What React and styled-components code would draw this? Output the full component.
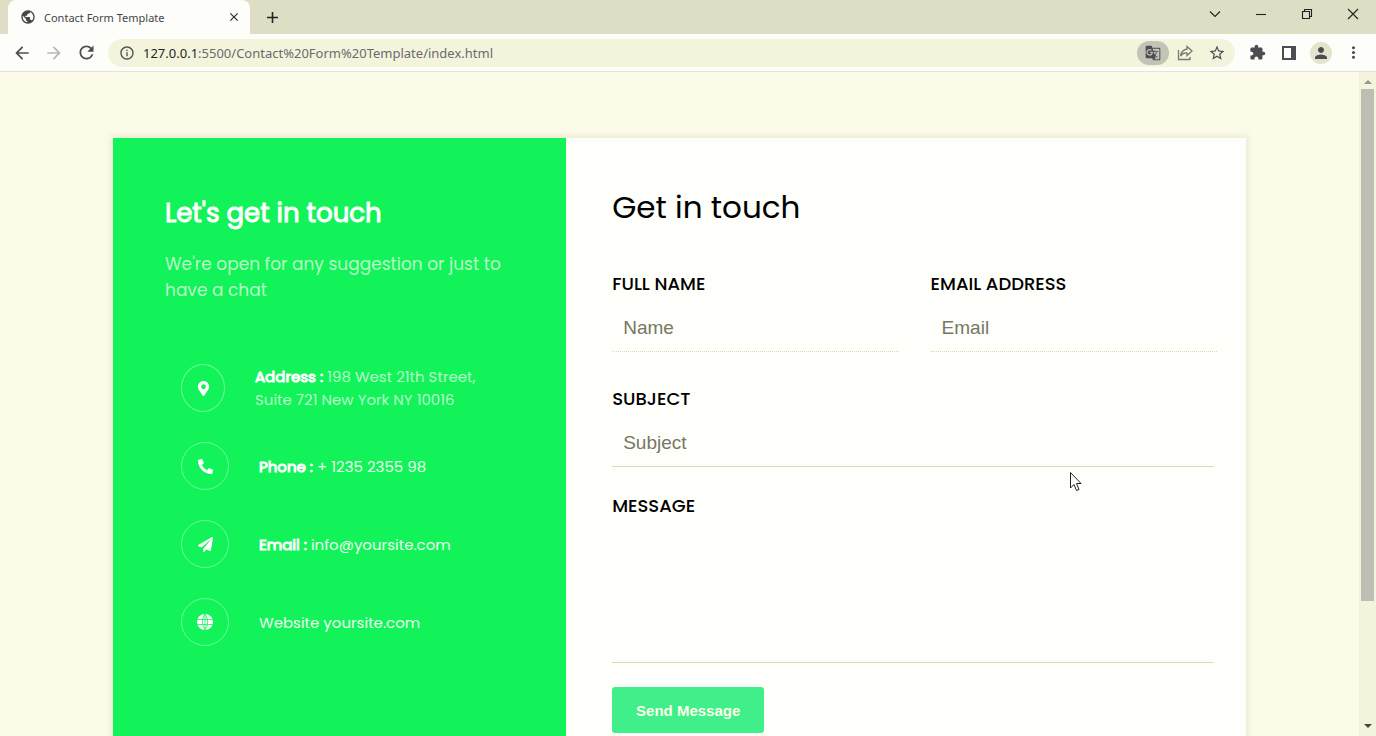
import React from "react";
import styled, { createGlobalStyle } from "styled-components";
import { MdArrowBack, MdArrowForward, MdRefresh, MdInfoOutline, MdPublic, MdClose, MdAdd, MdGTranslate, MdStarBorder, MdExtension, MdPerson, MdMoreVert } from "react-icons/md";
import { FaMapMarkerAlt, FaPhoneAlt, FaPaperPlane } from "react-icons/fa";

const Global = createGlobalStyle`
  * { box-sizing: border-box; }
  html, body { margin: 0; height: 100%; overflow: hidden; }
  #root { height: 100%; }
  body { font-family: "Noto Sans", "Open Sans", sans-serif; color: #111; }
  h1, h2, p { margin: 0; }
  button { border: 0; padding: 0; background: none; font: inherit; color: inherit; }
`;

const Browser = styled.div`
  height: 100vh;
  display: flex;
  flex-direction: column;
  overflow: hidden;
`;

const TabBar = styled.header`
  flex: none;
  height: 34px;
  display: flex;
  align-items: flex-end;
  padding-left: 8px;
  background: #dedec4;
`;

const Tab = styled.div`
  width: 242px;
  height: 34px;
  display: flex;
  align-items: center;
  gap: 8px;
  padding: 0 9px 0 12px;
  border-radius: 8px 8px 0 0;
  background: #fdfdf9;
  font-size: 11px;
  color: #45454a;
  svg { flex: none; }
`;

const TabTitle = styled.span`
  flex: 1;
  white-space: nowrap;
`;

const IconButton = styled.button`
  flex: none;
  width: ${(p) => p.$w || 32}px;
  height: ${(p) => p.$h || 28}px;
  display: flex;
  align-items: center;
  justify-content: center;
  border-radius: 14px;
  color: ${(p) => p.$color || "#4b4d52"};
  background: ${(p) => p.$bg || "transparent"};
`;

const WindowControls = styled.div`
  align-self: flex-start;
  margin-left: auto;
  display: flex;
`;

const Toolbar = styled.div`
  flex: none;
  height: 38px;
  display: flex;
  align-items: center;
  padding: 0 7px 0 6px;
  background: #fdfdf9;
  border-bottom: 1px solid #e4e4d2;
`;

const AddressBar = styled.div`
  flex: 1;
  height: 28px;
  display: flex;
  align-items: center;
  margin: 0 6px;
  padding: 0 2px 0 11px;
  border-radius: 14px;
  background: #f4f4dd;
  color: #4b4d52;
`;

const UrlText = styled.span`
  flex: 1;
  padding-left: 8px;
  font-size: 13px;
  white-space: nowrap;
  color: #6b6b69;
  b { font-weight: 400; color: #252525; }
`;

const Avatar = styled.span`
  width: 22px;
  height: 22px;
  display: flex;
  align-items: center;
  justify-content: center;
  border-radius: 50%;
  background: #e4e4cc;
`;

const Viewport = styled.div`
  flex: 1;
  min-height: 0;
  display: flex;
`;

const Page = styled.main`
  flex: 1;
  min-width: 0;
  overflow: hidden;
  padding: 66px 113px 0;
  background: #fcfbe9;
  font-family: Poppins, Lato, sans-serif;
`;

const Card = styled.section`
  display: grid;
  grid-template-columns: 2fr 3fr;
  min-height: 660px;
  background: #fefefa;
  box-shadow: 0 0 6px 2px rgba(150, 150, 90, 0.18);
`;

const InfoPanel = styled.aside`
  padding: 55px 52px;
  background: #12f35a;
  color: #fff;
`;

const InfoTitle = styled.h2`
  font-size: 26px;
  line-height: 40px;
  font-weight: 400;
  -webkit-text-stroke: 1px currentColor;
`;

const InfoLead = styled.p`
  padding-top: 18px;
  font-size: 17px;
  line-height: 26px;
  color: #b9fbc6;
`;

const ContactList = styled.ul`
  list-style: none;
  margin: 0;
  padding: 61px 0 0 16px;
  display: grid;
  gap: 30px;
`;

const ContactItem = styled.li`
  height: 48px;
  display: flex;
  align-items: center;
  gap: 30px;
  font-size: 15px;
  line-height: 23px;
  color: ${(p) => (p.$muted ? "#b9fbc6" : "#ecffee")};
  b {
    font-weight: 400;
    color: #fff;
    -webkit-text-stroke: 1px currentColor;
  }
`;

const Badge = styled.span`
  flex: none;
  width: ${(p) => (p.$narrow ? 44 : 48)}px;
  height: 48px;
  display: flex;
  align-items: center;
  justify-content: center;
  border: 1px solid #6df998;
  border-radius: 50%;
  color: #fff;
`;

const Form = styled.form`
  padding: 47px 29px 0 46px;
`;

const FormTitle = styled.h1`
  font-size: 31px;
  line-height: 44px;
  font-weight: 400;
  padding-bottom: 39px;
  color: #000;
`;

const Fields = styled.div`
  display: grid;
  grid-template-columns: 1fr 1fr;
  column-gap: 32px;
`;

const Field = styled.div`
  display: flex;
  flex-direction: column;
  grid-column: ${(p) => (p.$wide ? "1 / -1" : "auto")};
  padding-right: ${(p) => (p.$wide ? 3 : 0)}px;
  padding-bottom: ${(p) => p.$gap}px;
`;

const Label = styled.label`
  font-size: 18px;
  line-height: 32px;
  font-weight: 500;
  color: #000;
  text-transform: uppercase;
`;

const control = `
  width: 100%;
  border: 0;
  border-bottom: 1px solid #dcdcae;
  border-radius: 0;
  background: transparent;
  outline: 0;
  font-family: "Liberation Sans", Arial, sans-serif;
  font-size: 19px;
  color: #222;
  &::placeholder { color: #777765; opacity: 1; }
`;

const Input = styled.input`
  ${control}
  height: 52px;
  padding: 4px 11px 0;
  border-bottom-style: ${(p) => (p.$dotted ? "dotted" : "solid")};
`;

const TextArea = styled.textarea`
  ${control}
  display: block;
  height: 141px;
  resize: none;
`;

const Submit = styled.button`
  width: 152px;
  height: 46px;
  border-radius: 3px;
  background: #40ef8a;
  color: #fbffe9;
  font: 700 15px "Liberation Sans", Arial, sans-serif;
`;

const Scrollbar = styled.div`
  flex: none;
  width: 17px;
  display: flex;
  flex-direction: column;
  align-items: center;
  justify-content: space-between;
  padding: 8px 0;
  background: #f4f4dc;
`;

const Thumb = styled.div`
  width: 13px;
  flex: 0 1 512px;
  margin: 5px 0 auto;
  background: #bebeb4;
`;

const Arrow = styled.i`
  border: 4px solid transparent;
  border-top-width: ${(p) => (p.$up ? 0 : 4)}px;
  border-bottom-width: ${(p) => (p.$up ? 4 : 0)}px;
  border-${(p) => (p.$up ? "bottom" : "top")}-color: ${(p) => (p.$up ? "#94948a" : "#454545")};
`;

const Cursor = styled.svg`
  position: absolute;
  left: 1069px;
  top: 471px;
  pointer-events: none;
`;

const Line = ({ d, size = 12 }) => (
  <svg width={size} height={size} viewBox="0 0 12 12" fill="none" stroke="#222" strokeWidth="1.1"><path d={d} /></svg>
);

const contacts = [
  { icon: <FaMapMarkerAlt size={15} />, label: "Address :", text: <>198 West 21th Street,<br />Suite 721 New York NY 10016</>, muted: true },
  { icon: <FaPhoneAlt size={15} />, label: "Phone :", text: "+ 1235 2355 98" },
  { icon: <FaPaperPlane size={15} />, label: "Email :", text: "info@yoursite.com" },
  { icon: (
    <svg width="16" height="16" viewBox="0 0 16 16">
      <circle cx="8" cy="8" r="8" fill="currentColor" />
      <path d="M0 5.5H16M0 10.5H16M8 0V16M8 0Q2.500 8 8 16Q13.500 8 8 0" fill="none" stroke="#12f35a" strokeWidth=".8" />
    </svg>
  ), text: "Website yoursite.com" },
];

export default function App() {
  return (
    <Browser>
      <Global />
      <TabBar>
        <Tab>
          <MdPublic size={16} />
          <TabTitle>Contact Form Template</TabTitle>
          <IconButton $w={14} $color="#2c2c2c" aria-label="Close tab"><MdClose size={14} /></IconButton>
        </Tab>
        <IconButton $w={44} $h={34} $color="#22241f" aria-label="New tab"><MdAdd size={19} /></IconButton>
        <WindowControls>
          <IconButton $w={46} aria-label="Search tabs"><Line d="M1 3.500L6 8.500L11 3.500" /></IconButton>
          <IconButton $w={46} aria-label="Minimize"><Line d="M1 6.500H11" /></IconButton>
          <IconButton $w={46} aria-label="Restore"><Line d="M1.500 3.500H8.500V10.500H1.500ZM3.500 3.500V1.500H10.500V8.500H8.500" /></IconButton>
          <IconButton $w={46} aria-label="Close"><Line d="M1 1L11 11M11 1L1 11" /></IconButton>
        </WindowControls>
      </TabBar>
      <Toolbar>
        <IconButton aria-label="Back"><MdArrowBack size={20} /></IconButton>
        <IconButton $color="#b8b8b4" aria-label="Forward"><MdArrowForward size={20} /></IconButton>
        <IconButton aria-label="Reload"><MdRefresh size={21} /></IconButton>
        <AddressBar>
          <MdInfoOutline size={16} />
          <UrlText><b>127.0.0.1</b>:5500/Contact%20Form%20Template/index.html</UrlText>
          <IconButton $h={24} $bg="#c4c4b6" aria-label="Translate"><MdGTranslate size={16} /></IconButton>
          <IconButton $color="#77786f" aria-label="Share">
            <svg width="16" height="16" viewBox="0 0 16 16" fill="none" stroke="currentColor" strokeWidth="1.3">
              <path d="M1.500 5V14.500H13V12M10 1.500L15 6L10 10.500V8Q6 7.500 3.500 11Q4.500 5 10 4Z" />
            </svg>
          </IconButton>
          <IconButton aria-label="Bookmark"><MdStarBorder size={18} /></IconButton>
        </AddressBar>
        <IconButton aria-label="Extensions"><MdExtension size={17} /></IconButton>
        <IconButton aria-label="Side panel">
          <svg width="14" height="14" viewBox="0 0 14 14"><path d="M1 1H13V13H1Z" fill="none" stroke="currentColor" strokeWidth="2" /><path d="M9 1H13V13H9Z" fill="currentColor" /></svg>
        </IconButton>
        <IconButton aria-label="Profile"><Avatar><MdPerson size={18} /></Avatar></IconButton>
        <IconButton aria-label="Menu"><MdMoreVert size={19} /></IconButton>
      </Toolbar>
      <Viewport>
        <Page>
          <Card>
            <InfoPanel>
              <InfoTitle>Let's get in touch</InfoTitle>
              <InfoLead>We're open for any suggestion or just to have a chat</InfoLead>
              <ContactList>
                {contacts.map((c, i) => (
                  <ContactItem key={i} $muted={c.muted}>
                    <Badge $narrow={c.muted}>{c.icon}</Badge>
                    <span>{c.label && <b>{c.label} </b>}{c.text}</span>
                  </ContactItem>
                ))}
              </ContactList>
            </InfoPanel>
            <Form>
              <FormTitle>Get in touch</FormTitle>
              <Fields>
                <Field $gap={31}><Label htmlFor="name">Full Name</Label><Input $dotted id="name" placeholder="Name" /></Field>
                <Field $gap={31}><Label htmlFor="email">Email Address</Label><Input $dotted id="email" type="email" placeholder="Email" /></Field>
                <Field $wide $gap={23}><Label htmlFor="subject">Subject</Label><Input id="subject" placeholder="Subject" /></Field>
                <Field $wide $gap={24}><Label htmlFor="message">Message</Label><TextArea id="message" /></Field>
              </Fields>
              <Submit type="button">Send Message</Submit>
            </Form>
          </Card>
        </Page>
        <Scrollbar><Arrow $up /><Thumb /><Arrow /></Scrollbar>
      </Viewport>
      <Cursor width="14" height="22" viewBox="0 0 14 22"><path d="M1.500 1.500V17L5 13.500L7.500 19.500L10 18.500L7.500 12.500H12Z" fill="#fff" stroke="#222" /></Cursor>
    </Browser>
  );
}
